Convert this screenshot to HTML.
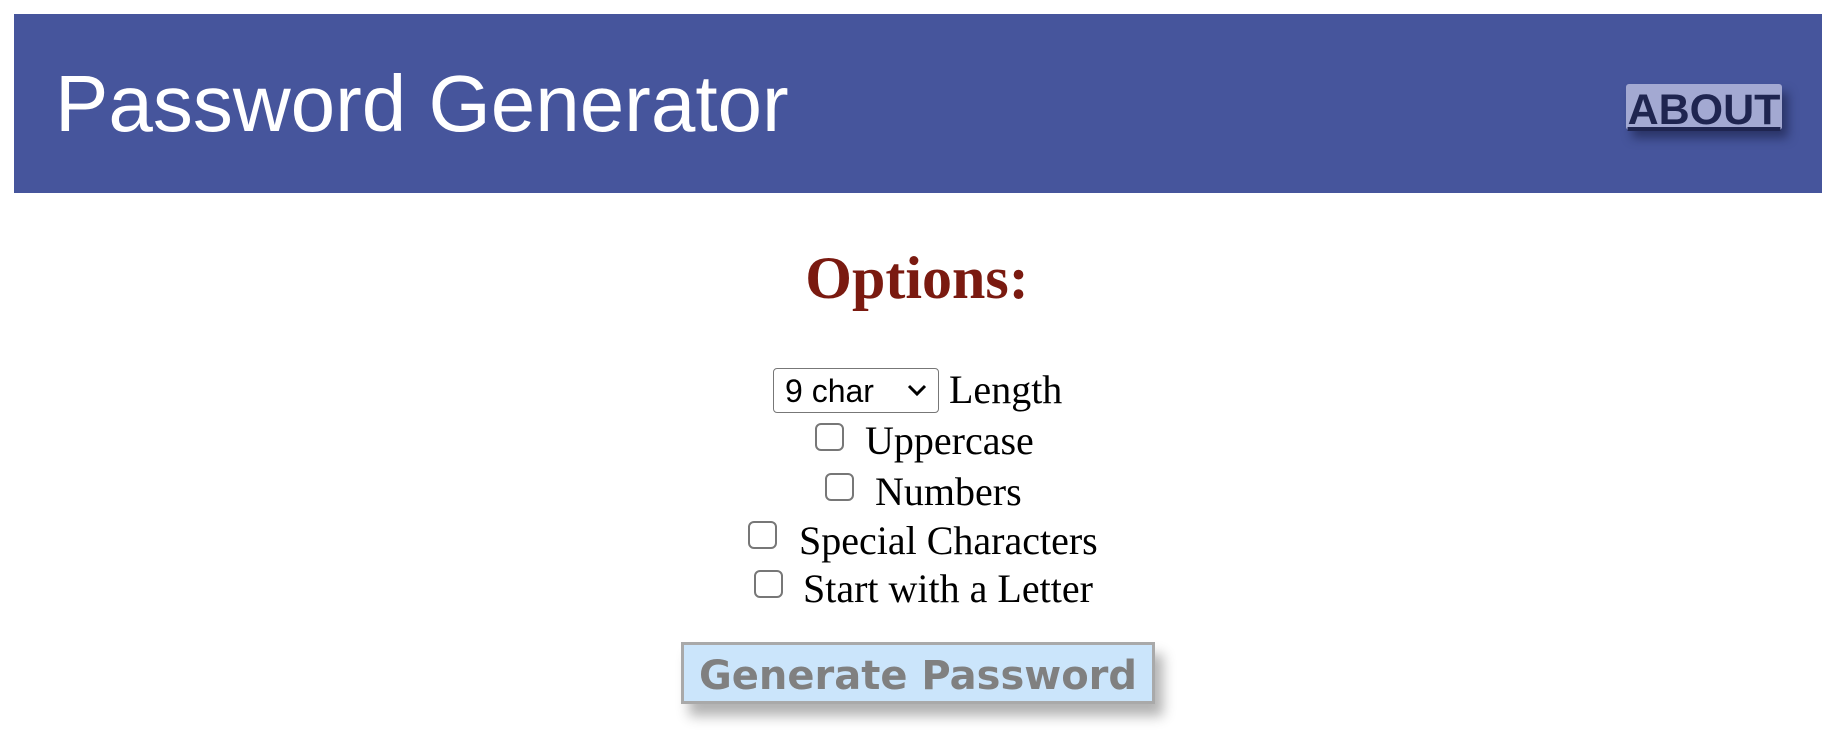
<!DOCTYPE html>
<html><head><meta charset="utf-8"><style>
body{margin:0;width:1834px;height:742px;background:#fff;position:relative;overflow:hidden}
.hdr{position:absolute;left:14px;top:14px;width:1808px;height:179px;background:#46559c}
.title{position:absolute;left:55px;top:59px;font:80px "Liberation Sans",Arial,sans-serif;color:#fff;line-height:90px;white-space:nowrap}
.about{position:absolute;left:1626px;top:84px;width:156px;height:46px;background:#a3a9d2;color:#1f2550;font:bold 43px "Liberation Sans",Arial,sans-serif;text-decoration:underline;line-height:52px;text-align:center;box-shadow:6px 8px 10px rgba(20,25,60,.55);border-radius:3px;white-space:nowrap;overflow:visible}
.opt{position:absolute;left:0;width:1834px;top:238px;text-align:center;font:bold 60px "Liberation Serif","Times New Roman",serif;color:#7a1a10;line-height:80px}
.t{position:absolute;font:40px "Liberation Serif","Times New Roman",serif;color:#000;white-space:nowrap;line-height:40px}
.sel{position:absolute;left:773px;top:368px;width:166px;height:45px;border:1.5px solid #777;border-radius:4px;font:32px "Liberation Sans",Arial,sans-serif;box-sizing:border-box}
.sel span{position:absolute;left:11px;top:3px;line-height:38px}
.sel svg{position:absolute;right:10px;top:14px}
.cb{position:absolute;width:29px;height:28px;border:2px solid #777;border-radius:6px;box-sizing:border-box;background:#fff}
.btn{position:absolute;left:681px;top:642px;width:474px;height:62px;background:#cbe5fb;border:3px solid #a9a9a9;box-sizing:border-box;box-shadow:8px 12px 12px rgba(0,0,0,.3);font:bold 40px "DejaVu Sans",Verdana,sans-serif;color:#808080;text-align:center;line-height:62px;white-space:nowrap}
</style></head><body>
<div class="hdr"></div>
<div class="title">Password Generator</div>
<div class="about">ABOUT</div>
<div class="opt">Options:</div>
<div class="sel"><span>9 char</span><svg width="22" height="14" viewBox="0 0 22 14"><path d="M3 3 L11 11 L19 3" stroke="#000" stroke-width="3" fill="none"/></svg></div>
<div class="t" style="left:949px;top:370px">Length</div>
<div class="cb" style="left:815px;top:423px"></div>
<div class="t" style="left:865px;top:421px">Uppercase</div>
<div class="cb" style="left:825px;top:473px"></div>
<div class="t" style="left:875px;top:472px">Numbers</div>
<div class="cb" style="left:748px;top:521px"></div>
<div class="t" style="left:799px;top:521px">Special Characters</div>
<div class="cb" style="left:754px;top:570px"></div>
<div class="t" style="left:803px;top:569px">Start with a Letter</div>
<div class="btn">Generate Password</div>
</body></html>
